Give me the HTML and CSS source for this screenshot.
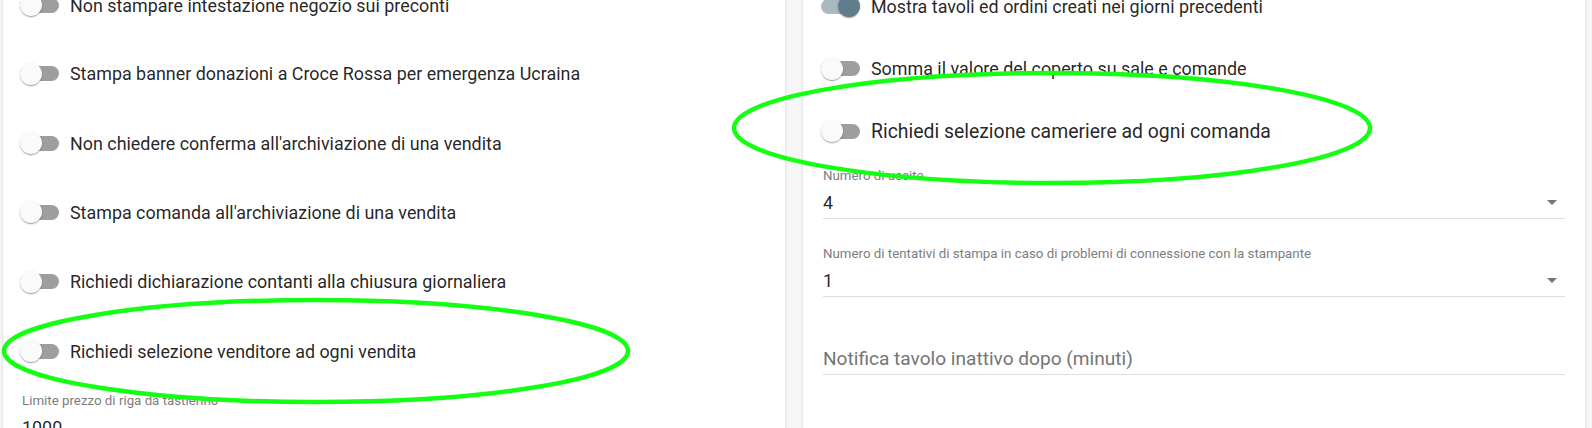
FILE: index.html
```html
<!DOCTYPE html>
<html lang="it">
<head>
    <meta charset="UTF-8">
    <meta name="viewport" content="width=device-width, initial-scale=1.0">
    <title>Impostazioni</title>
    <link rel="stylesheet" href="styles.css">
</head>
<body>
    <div class="page">
        <section class="card card-left">
            <div class="toggle-row">
                <span class="toggle"><span class="thumb"></span></span>
                <span class="toggle-label">Non stampare intestazione negozio sui preconti</span>
            </div>
            <div class="toggle-row">
                <span class="toggle"><span class="thumb"></span></span>
                <span class="toggle-label">Stampa banner donazioni a Croce Rossa per emergenza Ucraina</span>
            </div>
            <div class="toggle-row">
                <span class="toggle"><span class="thumb"></span></span>
                <span class="toggle-label">Non chiedere conferma all'archiviazione di una vendita</span>
            </div>
            <div class="toggle-row">
                <span class="toggle"><span class="thumb"></span></span>
                <span class="toggle-label">Stampa comanda all'archiviazione di una vendita</span>
            </div>
            <div class="toggle-row">
                <span class="toggle"><span class="thumb"></span></span>
                <span class="toggle-label">Richiedi dichiarazione contanti alla chiusura giornaliera</span>
            </div>
            <div class="toggle-row">
                <span class="toggle"><span class="thumb"></span></span>
                <span class="toggle-label">Richiedi selezione venditore ad ogni vendita</span>
            </div>
            <div class="field">
                <div class="field-label">Limite prezzo di riga da tastierino</div>
                <div class="field-value">1000</div>
            </div>
        </section>

        <section class="card card-right">
            <div class="toggle-row">
                <span class="toggle on"><span class="thumb"></span></span>
                <span class="toggle-label">Mostra tavoli ed ordini creati nei giorni precedenti</span>
            </div>
            <div class="toggle-row">
                <span class="toggle"><span class="thumb"></span></span>
                <span class="toggle-label">Somma il valore del coperto su sale e comande</span>
            </div>
            <div class="toggle-row large">
                <span class="toggle"><span class="thumb"></span></span>
                <span class="toggle-label">Richiedi selezione cameriere ad ogni comanda</span>
            </div>
            <div class="field">
                <div class="field-label">Numero di uscite</div>
                <div class="field-value">4<span class="arrow"></span></div>
            </div>
            <div class="field">
                <div class="field-label">Numero di tentativi di stampa in caso di problemi di connessione con la stampante</div>
                <div class="field-value">1<span class="arrow"></span></div>
            </div>
            <div class="field">
                <div class="field-label"></div>
                <div class="field-value placeholder">Notifica tavolo inattivo dopo (minuti)</div>
            </div>
        </section>
    </div>

    <!-- green marker rings drawn over the screenshot -->
    <svg class="marks" width="1592" height="428" viewBox="0 0 1592 428">
        <ellipse cx="316" cy="351" rx="312" ry="51" />
        <ellipse cx="1052" cy="128" rx="318" ry="55" />
    </svg>
</body>
</html>
```

FILE: styles.css
```css
body {
    margin: 0;
    height: 428px;
    overflow: hidden;
    background-color: #f7f7f7;
    font-family: Roboto, "Liberation Sans", Arial, sans-serif;
    color: rgba(0, 0, 0, 0.87);
    position: relative;
}
.page {
    display: grid;
    grid-template-columns: 782px 782px;
    column-gap: 18px;
    padding-left: 3px;
    align-items: start;
}
.card {
    background-color: #fff;
    box-shadow: 0 2px 1px -1px rgba(0, 0, 0, 0.2), 0 1px 1px 0 rgba(0, 0, 0, 0.14), 0 1px 3px 0 rgba(0, 0, 0, 0.12);
    height: 520px;
}
.card-left {
    margin-top: -29px;
    padding: 0 20px 0 17px;
}
.card-left .toggle-row {
    height: 69.4px;
}
.card-left .toggle-row:first-child {
    height: 68px;
}
.card-right {
    margin-top: -25px;
    padding: 0 20px 0 18px;
}
.card-right .toggle-row {
    height: 62.5px;
}
.toggle-row {
    display: flex;
    align-items: center;
    gap: 11px;
    font-size: 17.9px;
}
.toggle-row.large {
    font-size: 19.4px;
}
.toggle {
    position: relative;
    flex: none;
    width: 39px;
    height: 15px;
    border-radius: 8px;
    background-color: #9e9e9e;
}
.thumb {
    position: absolute;
    left: 0;
    top: -3.5px;
    width: 22px;
    height: 22px;
    border-radius: 50%;
    background-color: #fafafa;
    box-shadow: 0 2px 1px -1px rgba(0, 0, 0, 0.2), 0 1px 1px 0 rgba(0, 0, 0, 0.14), 0 1px 3px 0 rgba(0, 0, 0, 0.12);
}
.toggle.on {
    background-color: #a9b9c0;
}
.toggle.on .thumb {
    left: 17px;
    background-color: #607d8b;
}
.field {
    margin: 5px 0 27px 2px;
    border-bottom: 1px solid #dedede;
    padding-bottom: 4px;
}
.card-left .field {
    margin-top: 7px;
    border-bottom: none;
}
.field-label {
    font-size: 13.3px;
    line-height: 16px;
    height: 16px;
    color: #7d7d7d;
    margin-bottom: 8px;
}
.field-value {
    display: flex;
    align-items: center;
    justify-content: space-between;
    font-size: 17.9px;
    line-height: 22px;
}
.placeholder {
    font-size: 19.1px;
    color: #757575;
}
.arrow {
    width: 0;
    height: 0;
    margin-right: 8px;
    border-left: 5px solid transparent;
    border-right: 5px solid transparent;
    border-top: 5px solid #757575;
}
.marks {
    position: absolute;
    left: 0;
    top: 0;
    pointer-events: none;
}
.marks ellipse {
    fill: none;
    stroke: #14ff14;
    stroke-width: 4.5;
}
```
